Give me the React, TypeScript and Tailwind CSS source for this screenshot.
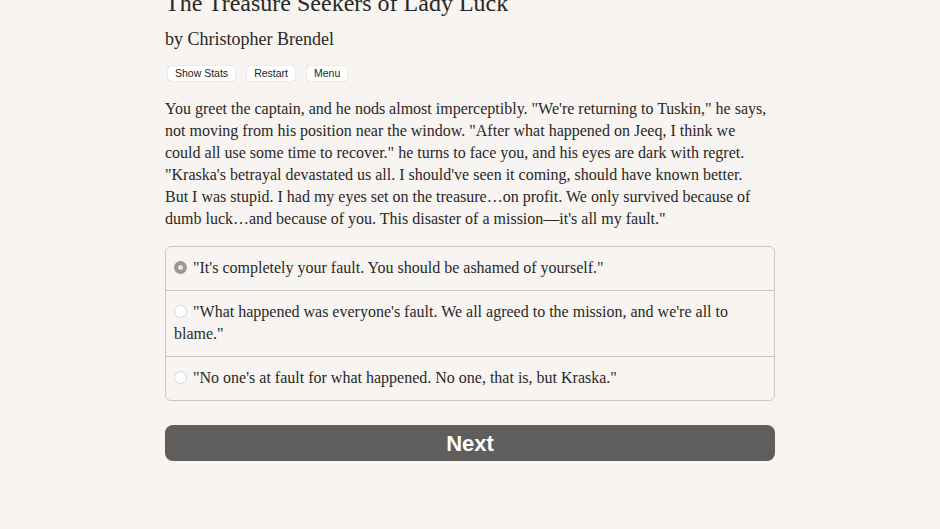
import React from "react";

const serif = { fontFamily: '"Liberation Serif", "DejaVu Serif", serif' } as React.CSSProperties;

function Radio({ checked }: { checked?: boolean }) {
  return (
    <span className={`inline-flex w-[13px] h-[13px] rounded-full mr-[6px] align-middle relative top-[-2px] items-center justify-center ${checked ? "bg-[#9a9896]" : "bg-white border border-[#d8d5d2]"}`}>
      {checked && <span className="w-[5px] h-[5px] rounded-full bg-[#e8e6e4]" />}
    </span>
  );
}

export default function App() {
  return (
    <div className="w-[940px] h-[529px] overflow-hidden bg-[#f7f4f1] text-[#2a2826]" style={serif}>
      <div className="w-[610px] mx-auto mt-[-12px]">
        <h1 className="text-[24px] leading-[30px]">The Treasure Seekers of Lady Luck</h1>
        <h2 className="mt-[9px] text-[18px] leading-[24px]">by Christopher Brendel</h2>
        <div className="mt-[15px] flex gap-[12px] pl-[3px]" style={{ fontFamily: '"Liberation Sans", Arial, sans-serif' }}>
          {["Show Stats", "Restart", "Menu"].map((t) => (
            <button key={t} className="h-[15px] px-[7px] bg-white rounded-[3px] shadow-[0_0_1px_rgba(0,0,0,0.4)] text-[10.5px] leading-[15px] text-[#222]">{t}</button>
          ))}
        </div>
        <p className="mt-[17px] text-[16px] leading-[22px] whitespace-nowrap">
          You greet the captain, and he nods almost imperceptibly. "We're returning to Tuskin," he says,<br />
          not moving from his position near the window. "After what happened on Jeeq, I think we<br />
          could all use some time to recover." he turns to face you, and his eyes are dark with regret.<br />
          "Kraska's betrayal devastated us all. I should've seen it coming, should have known better.<br />
          But I was stupid. I had my eyes set on the treasure…on profit. We only survived because of<br />
          dumb luck…and because of you. This disaster of a mission—it's all my fault."
        </p>
        <div className="mt-[16px] border border-[#c9c6c3] rounded-[6px] text-[16px] leading-[22px]">
          <div className="px-[8px] pt-[10px] pb-[11px]"><Radio checked />"It's completely your fault. You should be ashamed of yourself."</div>
          <div className="px-[8px] pt-[10px] pb-[11px] border-t border-[#c9c6c3]"><Radio />"What happened was everyone's fault. We all agreed to the mission, and we're all to blame."</div>
          <div className="px-[8px] pt-[10px] pb-[11px] border-t border-[#c9c6c3]"><Radio />"No one's at fault for what happened. No one, that is, but Kraska."</div>
        </div>
        <button className="mt-[24px] w-full h-[36px] rounded-[8px] bg-[#5f5e5c] text-white text-[22px] font-bold" style={{ fontFamily: '"Liberation Sans", Arial, sans-serif' }}>Next</button>
      </div>
    </div>
  );
}
